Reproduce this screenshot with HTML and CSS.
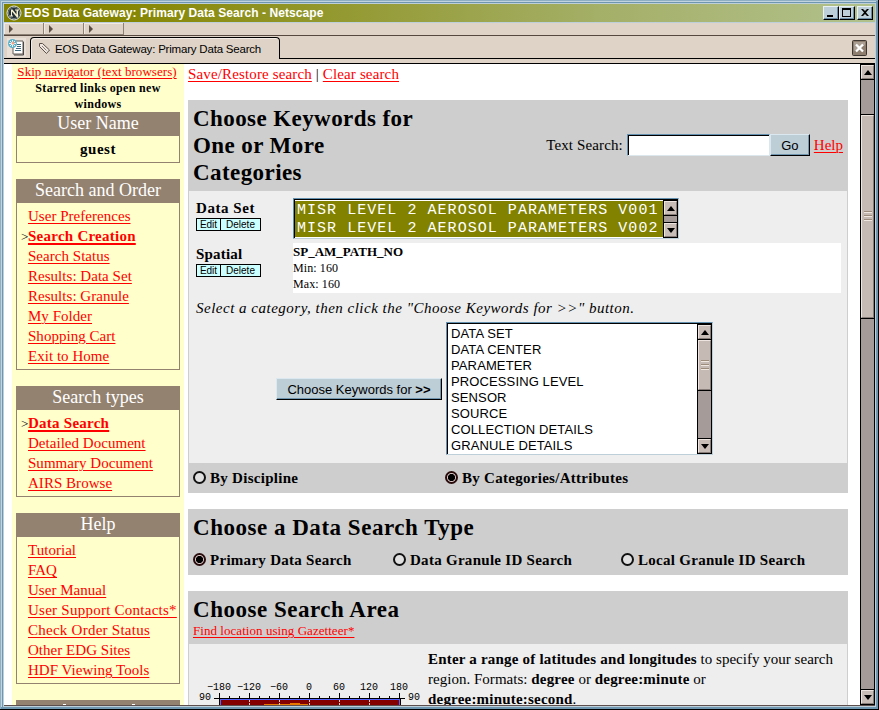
FILE: index.html
```html
<!DOCTYPE html>
<html lang="en">
<head>
<meta charset="utf-8">
<title>EOS Data Gateway: Primary Data Search</title>
<link rel="stylesheet" href="styles.css">
</head>
<body>
<div class="window">
  <header class="titlebar">
    <svg class="logo" width="16" height="16" viewBox="0 0 16 16"><circle cx="8" cy="8" r="7" fill="#233038" stroke="#e9eee0" stroke-width="1"/><circle cx="8" cy="8" r="5.6" fill="none" stroke="#95a29c" stroke-width=".7"/><path d="M3.500 4.500h3l4 5v-4H9v-1h4v1h-1v7h-1l-5-6v4h1v1H3.500v-1H5v-6H3.500z" fill="#f7f2cd"/></svg>
    <span class="title">EOS Data Gateway: Primary Data Search - Netscape</span>
    <div class="winbtns">
      <span class="wb"><svg width="13" height="12" viewBox="0 0 13 12"><path d="M3 8h6v2H3z"/></svg></span>
      <span class="wb"><svg width="13" height="12" viewBox="0 0 13 12"><path d="M2 1h9v9H2zM3 3v6h7V3z" fill-rule="evenodd"/></svg></span>
      <span class="wb close"><svg width="13" height="12" viewBox="0 0 13 12"><path d="M3 2h2l2 2 2-2h2L8 5.500 11 9H9L7 7 5 9H3l3-3.500z"/></svg></span>
    </div>
  </header>
  <div class="toolbar"><i class="grip"></i><i class="grip"></i><i class="grip"></i></div>
  <div class="tabs">
    <svg class="newtab" width="21" height="21" viewBox="0 0 21 21"><path d="M1 1h19v19H1z" fill="#e9e1d8"/><path d="M7 4h10v13H7z" fill="#fff" stroke="#625c58"/><path d="M17.500 5v13H8" fill="none" stroke="#4b4744"/><path d="M11 7.500h4M11 9.500h4M10 11.500h5M9 13.500h6" stroke="#3f6b80"/><circle cx="6.500" cy="6.500" r="4.500" fill="#5cb1ca"/><path d="M6.500 3v7M3 6.500h7M4 4l5 5M9 4l-5 5" stroke="#fff" stroke-width=".9"/><circle cx="7" cy="6" r="1.500" fill="#f2a183"/></svg>
    <div class="tab">
      <svg class="tabicon" width="13" height="13" viewBox="0 0 13 13"><path d="M1.500 1.500h3l7 6.500-3 3.500-7-7z" fill="#eee6df" stroke="#5c524b"/><path d="M4 4l4.500 4.500" stroke="#8d8279"/></svg>
      <span>EOS Data Gateway: Primary Data Search</span>
    </div>
    <svg class="tabclose" width="15" height="16" viewBox="0 0 15 16"><rect x=".5" y=".5" width="14" height="15" rx="1" fill="#8d7e70" stroke="#3f3731"/><path d="M2 2h11v3L2 11z" fill="#ab9f93"/><path d="M4 4.500l7 7M11 4.500l-7 7" stroke="#fff" stroke-width="2.300"/></svg>
  </div>
  <div class="viewport">
    <div class="page">
      <nav class="side">
        <div class="skip"><a>Skip navigator (text browsers)</a></div>
        <div class="starred">Starred links open new<br>windows</div>
        <section class="box"><h3>User Name</h3><div class="guest">guest</div></section>
        <section class="box"><h3>Search and Order</h3><ul>
          <li><a>User Preferences</a></li><li class="cur"><a>Search Creation</a></li><li><a>Search Status</a></li><li><a>Results: Data Set</a></li><li><a>Results: Granule</a></li><li><a>My Folder</a></li><li><a>Shopping Cart</a></li><li><a>Exit to Home</a></li></ul></section>
        <section class="box"><h3>Search types</h3><ul>
          <li class="cur"><a>Data Search</a></li><li><a>Detailed Document</a></li><li><a>Summary Document</a></li><li><a>AIRS Browse</a></li></ul></section>
        <section class="box"><h3>Help</h3><ul>
          <li><a>Tutorial</a></li><li><a>FAQ</a></li><li><a>User Manual</a></li><li class="loose"><a>User Support Contacts*</a></li><li class="loose"><a>Check Order Status</a></li><li><a>Other EDG Sites</a></li><li><a>HDF Viewing Tools</a></li></ul></section>
        <section class="box next"></section>
      </nav>
      <main>
        <div class="toplinks"><a>Save/Restore search</a> | <a>Clear search</a></div>
        <section class="panel">
          <div class="phead keywords">
            <h2>Choose Keywords for One or More Categories</h2>
            <div class="search"><span class="lbl">Text Search:</span><span class="field"></span><span class="btn go">Go</span><a>Help</a></div>
          </div>
          <div class="pbody">
            <div class="row ds">
              <div class="rl"><b>Data Set</b><div class="mini"><span>Edit</span><span>Delete</span></div></div>
              <div class="list olive"><div class="opts"><p>MISR LEVEL 2 AEROSOL PARAMETERS V001</p><p>MISR LEVEL 2 AEROSOL PARAMETERS V002</p></div>
                <div class="sb"><span class="ar up"></span><span class="track"></span><span class="ar down"></span></div></div>
            </div>
            <div class="row sp">
              <div class="rl"><b>Spatial</b><div class="mini"><span>Edit</span><span>Delete</span></div></div>
              <div class="spatial"><b>SP_AM_PATH_NO</b><p>Min: 160</p><p>Max: 160</p></div>
            </div>
            <p class="hint">Select a category, then click the "Choose Keywords for &gt;&gt;" button.</p>
            <div class="choose">
              <span class="btn kw">Choose Keywords for <b>&gt;&gt;</b></span>
              <div class="list cats"><div class="opts"><p>DATA SET</p><p>DATA CENTER</p><p>PARAMETER</p><p>PROCESSING LEVEL</p><p>SENSOR</p><p>SOURCE</p><p>COLLECTION DETAILS</p><p>GRANULE DETAILS</p></div>
                <div class="sb"><span class="ar up"></span><span class="thumb"><i></i></span><span class="track"></span><span class="ar down"></span></div></div>
            </div>
          </div>
          <div class="radios by"><label><i class="radio"></i>By Discipline</label><label><i class="radio on"></i>By Categories/Attributes</label></div>
        </section>
        <section class="panel type">
          <h2>Choose a Data Search Type</h2>
          <div class="radios kinds"><label><i class="radio on"></i>Primary Data Search</label><label><i class="radio"></i>Data Granule ID Search</label><label><i class="radio"></i>Local Granule ID Search</label></div>
        </section>
        <section class="panel area">
          <div class="phead"><h2>Choose Search Area</h2><a class="gaz">Find location using Gazetteer*</a></div>
          <div class="pbody map-row">
            <svg class="map" width="232" height="62" viewBox="0 0 232 62">
              <g class="ax"><text x="8" y="46" textLength="24">−180</text><text x="38" y="46" textLength="24">−120</text><text x="71" y="46" textLength="18">−60</text><text x="107" y="46">0</text><text x="134" y="46" textLength="12">60</text><text x="161" y="46" textLength="18">120</text><text x="191" y="46" textLength="18">180</text><text x="0" y="56" textLength="12">90</text><text x="209" y="56" textLength="12">90</text></g>
              <path d="M15 54.500h191M20.500 49v5M50.500 49v5M80.500 49v5M110.500 49v5M140.500 49v5M170.500 49v5M200.500 49v5M30.500 52v2M40.500 52v2M60.500 52v2M70.500 52v2M90.500 52v2M100.500 52v2M120.500 52v2M130.500 52v2M150.500 52v2M160.500 52v2M180.500 52v2M190.500 52v2" stroke="#000"/>
              <path d="M20 54h182v8H20z"/><path d="M21 55h180v7H21z" fill="#5565ff"/><path d="M22 56h178v6H22z" fill="#840000"/>
              <path d="M65 60h26v-1h10v1h8v1h-5v1H65z" fill="#e87800"/>
              <path d="M50.500 56v6M80.500 56v6M110.500 56v6M140.500 56v6M170.500 56v6" stroke="#ccc" stroke-dasharray="2 1"/>
            </svg>
            <p class="range"><b>Enter a range of latitudes and longitudes</b> to specify your search<br>region. Formats: <b>degree</b> or <b>degree:minute</b> or<br><b>degree:minute:second</b>.</p>
          </div>
        </section>
      </main>
    </div>
    <div class="sb big"><span class="ar up"></span><span class="track t1"></span><span class="thumb"><i></i></span><span class="track"></span><span class="ar down"></span></div>
  </div>
</div>
</body>
</html>
```

FILE: styles.css
```css
* { box-sizing: border-box; }
html, body { margin: 0; height: 100%; overflow: hidden; }
body { font-family: "Liberation Serif", serif; color: #000; }
p, h2, h3, ul { margin: 0; padding: 0; }
ul { list-style: none; }
a { color: #f00; text-decoration: underline; text-underline-offset: 2px; text-decoration-thickness: 1px; }
svg { display: block; flex: none; }

.window { width: 879px; height: 710px; display: flex; flex-direction: column; background: #bdd0d9; padding: 4px; box-shadow: inset -1px -1px #000, inset 1px 1px #8fb0c4, inset -3px -3px #6f96b0, inset 2px 2px #c2d5de, inset 3px 3px #6f96b0; }

.titlebar { height: 18px; flex: none; display: flex; align-items: center; background: linear-gradient(90deg, #828200 0, #858500 12%, #a4af67 68%, #b1c18c 100%); padding-left: 2px; }
.title { font: bold 12px/18px "Liberation Sans", sans-serif; color: #fff; margin-left: 2px; letter-spacing: .07px; white-space: nowrap; }
.winbtns { margin-left: auto; display: flex; padding-right: 2px; }
.wb { width: 16px; height: 14px; background: #bdd0d9; border: 1px solid; border-color: #e8f0f4 #000 #000 #e8f0f4; box-shadow: inset -1px -1px #6c8ba4; overflow: hidden; }
.wb.close { margin-left: 2px; }

.toolbar { height: 14px; flex: none; display: flex; background: #dfd3c7; border-top: 1px solid #bdd0d9; border-bottom: 1px solid #56483e; }
.grip { width: 40px; border-right: 1px solid #8d8074; border-bottom: 1px solid #8d8074; box-shadow: inset 1px 1px #f1e9e2; display: flex; align-items: center; padding-left: 5px; }
.grip::before { content: ""; border: solid transparent; border-width: 4px 0 4px 4px; border-left-color: #5b4d43; }

.tabs { height: 28px; flex: none; display: flex; border-bottom: 1px solid #000; background: linear-gradient(#000, #000) 0 22px / 27px 1px no-repeat, linear-gradient(#000, #000) 275px 22px / 600px 1px no-repeat, #dfd3c7; }
.newtab { margin: 1px 0 0 2px; }
.tab { margin: 1px 0 0 3px; width: 250px; height: 22px; border: 1px solid #000; border-bottom: 0; border-radius: 4px 4px 0 0; display: flex; align-items: center; padding-left: 7px; font: 11px/20px "Liberation Sans", sans-serif; box-shadow: inset 1px 1px #f3ece6; white-space: nowrap; }
.tab span { margin-left: 4px; letter-spacing: -.2px; font-size: 11.5px; }
.tabclose { margin: 4px 8px 0 auto; }

.viewport { flex: 1; min-height: 0; display: flex; background: #fff; border-bottom: 1px solid #5c4e4c; }
.page { flex: 1; min-width: 0; height: 100%; overflow: hidden; display: flex; padding-left: 8px; }

.side { width: 172px; height: 700px; background: #ffffcc; padding: 0 4px; flex: none; }
.skip { font-size: 13px; line-height: 16px; text-align: center; white-space: nowrap; height: 16px; margin-left: -2px; letter-spacing: .05px; }
.starred { font-weight: bold; font-size: 12px; line-height: 16px; text-align: center; height: 32px; letter-spacing: .33px; }
.box { border: 1px solid #948270; margin-bottom: 16px; }
.box h3 { height: 23px; background: #948270; color: #fff; font-weight: normal; font-size: 18px; line-height: 21px; text-align: center; }
.next { height: 24px; background: linear-gradient(#fff, #fff) 46px 3px / 3px 1px no-repeat, linear-gradient(#fff, #fff) 115px 3px / 3px 1px no-repeat, #948270; }
.guest { font-weight: bold; font-size: 15px; line-height: 26px; height: 26px; text-align: center; letter-spacing: .5px; }
.box ul { padding: 3px 0 3px 11px; }
.box li { height: 20px; font-size: 15px; line-height: 20px; white-space: nowrap; position: relative; letter-spacing: .03px; }
.box li.cur, .box li.loose { letter-spacing: .25px; }
.cur a { font-weight: bold; text-decoration-thickness: 2px; }
.cur::before { content: ">"; position: absolute; left: -7px; top: 1px; font-size: 13px; letter-spacing: 0; }

main { margin-left: 4px; width: 660px; flex: none; }
.toplinks { height: 36px; font-size: 15px; line-height: 21px; white-space: nowrap; letter-spacing: .14px; }
.panel { background: #cecece; margin-bottom: 16px; }
h2 { font-size: 23px; line-height: 27px; font-weight: bold; letter-spacing: .52px; }
.keywords { height: 91px; padding: 5px 5px 0; display: flex; justify-content: space-between; }
.keywords h2 { width: 235px; letter-spacing: .42px; }
.search { display: flex; align-items: center; font-size: 15px; height: 80px; white-space: nowrap; }
.lbl { letter-spacing: .12px; }
.field { width: 143px; height: 22px; margin-left: 4px; background: #fff; border: 1px solid; border-color: #6491b0 #dbe6ed #dbe6ed #6491b0; box-shadow: inset 1px 1px #000; }
.btn { background: #bdced6; border: 1px solid; border-color: #dce8f0 #000 #000 #dce8f0; box-shadow: inset -1px -1px #7096b0; font: 13px/21px "Liberation Sans", sans-serif; text-align: center; height: 22px; white-space: nowrap; }
.go { width: 40px; margin-right: 4px; }

.pbody { background: #eee; border: solid #cecece; border-width: 0 1px; }
.row { display: flex; padding-left: 7px; }
.rl { width: 97px; flex: none; font-size: 15px; line-height: 17px; }
.rl b { display: block; height: 18px; letter-spacing: .55px; }
.mini { display: flex; font: 10px/11px "Liberation Sans", sans-serif; }
.mini span { border: 1px solid #000; background: #cff; height: 13px; width: 25px; text-align: center; }
.mini span + span { width: 41px; margin-left: -1px; }
.ds { height: 52px; padding-top: 8px; }
.ds .rl { padding-top: 1px; }
.sp { height: 50px; }
.sp .rl { padding-top: 3px; }
.sp .rl b { letter-spacing: .2px; }
.list { background: #fff; display: flex; border: 1px solid; border-color: #6491b0 #bdd0d9 #bdd0d9 #6491b0; box-shadow: inset 1px 1px #000; padding: 1px 0 0 1px; flex: none; }
.opts { flex: 1; }
.olive { width: 386px; height: 41px; margin-top: -1px; }
.olive .opts { background: #828200; color: #fff; font: 15px/18px "Liberation Mono", monospace; border-top: 1px solid #fff; border-bottom: 1px solid #fff; padding-left: 2px; white-space: nowrap; letter-spacing: 1.04px; overflow: hidden; }
.olive p { padding-top: 1px; height: 18px; }
.spatial { width: 548px; height: 50px; background: #fff; font-size: 12px; line-height: 16px; padding: 1px 0; letter-spacing: .1px; }
.spatial b { display: block; height: 16px; font-size: 13px; letter-spacing: 0; }
.hint { font-style: italic; font-size: 15px; line-height: 20px; padding: 5px 0 0 7px; height: 29px; white-space: nowrap; letter-spacing: .5px; }
.choose { display: flex; align-items: center; padding: 0 0 8px 87px; height: 141px; }
.kw { width: 166px; margin-right: 4px; }
.cats { width: 267px; height: 133px; }
.cats .opts { font: 13px/16px "Liberation Sans", sans-serif; padding: 2px 0 0 3px; overflow: hidden; letter-spacing: .12px; }

.sb { width: 15px; display: flex; flex-direction: column; border: 1px solid #000; flex: none; background: #a59c9a; }
.ar { height: 14px; flex: none; background: #c9bdb8; border: 1px solid; border-color: #eee5e0 #877c78 #877c78 #eee5e0; display: flex; align-items: center; justify-content: center; outline: 1px solid #000; }
.ar::before { content: ""; border: solid transparent; border-width: 0 4px 5px; border-bottom-color: #000; }
.ar.down::before { border-width: 5px 4px 0; border-top-color: #000; }
.track { flex: 1; }
.thumb { outline: 1px solid #000; background: #c6bab5; border: 1px solid; border-color: #eee5e0 #877c78 #877c78 #eee5e0; height: 50px; margin-top: 1px; flex: none; display: flex; align-items: center; justify-content: center; }
.thumb i { width: 8px; height: 11px; background: repeating-linear-gradient(#9c8c7c 0 1px, #f0e8e0 1px 2px, #c6bab5 2px 4px); }
.big .t1 { flex: none; height: 35px; }
.big .thumb { height: 203px; }

.radios { display: flex; font-weight: bold; font-size: 15px; white-space: nowrap; letter-spacing: .28px; }
.radios label { display: flex; align-items: center; padding-left: 5px; }
.radio { width: 13px; height: 13px; border: 2px solid #111; border-radius: 50%; margin-right: 4px; background: #e0e0e0; position: relative; top: -1px; }
.radio.on { border-color: #2a0c0c; background: radial-gradient(circle, #000 0 3.200px, #e0d0d0 4px 5px); }
.by { height: 30px; }
.by label:first-child { width: 252px; }
.type { height: 66px; padding-top: 5px; }
.type h2, .area h2 { padding-left: 5px; }
.kinds { height: 28px; margin-top: 5px; }
.kinds label:first-child { width: 200px; }
.kinds label:nth-child(2) { width: 228px; }
.area .phead { height: 53px; padding-top: 5px; }
.gaz { display: block; font-size: 13px; line-height: 16px; margin-left: 5px; width: max-content; letter-spacing: .05px; }
.map-row { display: flex; padding-left: 10px; height: 80px; }
.ax text { font: 10px "Liberation Mono", monospace; }
.range { padding-top: 5px; margin-left: -3px; font-size: 15px; line-height: 20px; white-space: nowrap; letter-spacing: .02px; }
.range b { letter-spacing: .2px; }
```
